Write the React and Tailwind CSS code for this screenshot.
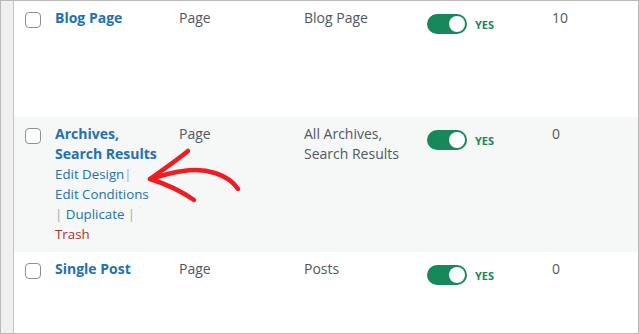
const rows = [
  { title: ["Blog Page"], type: "Page", location: ["Blog Page"], count: "10", h: "h-[116px]", bg: "bg-white" },
  {
    title: ["Archives,", "Search Results"],
    type: "Page",
    location: ["All Archives,", "Search Results"],
    count: "0",
    h: "h-[135px]",
    bg: "bg-[#f6f7f7]",
    actions: true,
  },
  { title: ["Single Post"], type: "Page", location: ["Posts"], count: "0", h: "flex-1", bg: "bg-white" },
];

function Toggle() {
  return (
    <div className="mt-[6px] flex items-center gap-2">
      <div className="flex h-[20px] w-[40px] items-center justify-end rounded-full bg-[#17885a] pr-[2px]">
        <div className="h-[16px] w-[16px] rounded-full bg-white" />
      </div>
      <span className="text-[11px] font-bold leading-none text-[#17885a]">YES</span>
    </div>
  );
}

function Sep() {
  return <span className="text-[#a7aaad]">|</span>;
}

export default function App() {
  return (
    <div
      className="relative flex h-[334px] w-[639px] border border-[#b9b9b9] bg-white text-[14px] leading-[20px] text-[#50575e]"
      style={{ fontFamily: '"Open Sans", "Liberation Sans", sans-serif' }}
    >
      <div className="w-[13px] border-r border-[#c3c4c7] bg-[#f0f0f1]" />
      <div className="flex flex-1 flex-col">
        {rows.map((r, i) => (
          <div key={i} className={`grid grid-cols-[41px_124px_125px_123px_125px_1fr] pt-[7px] ${r.h} ${r.bg}`}>
            <div className="pl-[11px] pt-[4px]">
              <div className="h-[16px] w-[16px] rounded-[4px] border border-[#8c8f94] bg-white" />
            </div>
            <div>
              {r.title.map((t) => (
                <div key={t} className="font-bold text-[#2271b1]">{t}</div>
              ))}
              {r.actions && (
                <div className="text-[13.3px] text-[#2271b1]">
                  <div>Edit Design<Sep /></div>
                  <div>Edit Conditions</div>
                  <div><Sep /> Duplicate <Sep /></div>
                  <div className="text-[#b32d2e]">Trash</div>
                </div>
              )}
            </div>
            <div>{r.type}</div>
            <div>
              {r.location.map((t) => (
                <div key={t}>{t}</div>
              ))}
            </div>
            <div><Toggle /></div>
            <div>{r.count}</div>
          </div>
        ))}
      </div>
      <svg className="pointer-events-none absolute left-0 top-0" width="639" height="334" viewBox="0 0 639 334">
        <g fill="none" stroke="#ee1c23" strokeWidth="4.5" strokeLinecap="round" strokeLinejoin="round">
          <path d="M237 188 C228 174 205 166 182 170 C168 172 156 176 149 178" />
          <path d="M187 150 C175 160 160 170 149 178 C162 182 180 190 193 199" />
        </g>
      </svg>
    </div>
  );
}
